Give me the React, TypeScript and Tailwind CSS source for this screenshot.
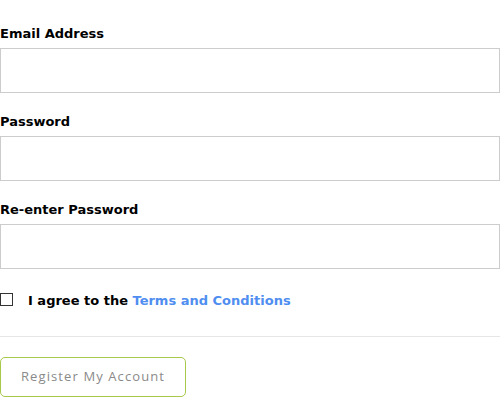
export default function App() {
  return (
    <div className="w-[501px] h-[418px] bg-white font-['DejaVu_Sans',sans-serif]">
      <form className="w-[500px] pt-[24px]" onSubmit={(e) => e.preventDefault()}>
        <Field label="Email Address" type="email" first />
        <Field label="Password" type="password" />
        <Field label="Re-enter Password" type="password" />

        <label className="mt-[22px] flex items-center h-[20px] text-[13px] font-bold text-black">
          <span className="w-[13px] h-[13px] border border-[#333] bg-white mr-[15px] -mt-[4px]" />
          I agree to the&nbsp;
          <a href="#" className="text-[#4f8ef0]">
            Terms and Conditions
          </a>
        </label>

        <hr className="mt-[25px] border-0 border-t border-[#e6e6e6]" />

        <button
          type="submit"
          className="mt-[20px] h-[40px] px-[20px] rounded-[5px] border border-[#a8c94a] bg-white font-['Open_Sans',sans-serif] text-[13px] tracking-[1.1px] text-[#8a8a8a]"
        >
          Register My Account
        </button>
      </form>
    </div>
  );
}

function Field({ label, type, first }: any) {
  return (
    <div className={first ? "" : "mt-[19px]"}>
      <div className="h-[20px] mb-[4px] text-[13px] leading-[20px] font-bold text-black">
        {label}
      </div>
      <input
        type={type}
        className="block w-[500px] h-[45px] border border-[#cccccc] bg-white px-3 outline-none"
      />
    </div>
  );
}
